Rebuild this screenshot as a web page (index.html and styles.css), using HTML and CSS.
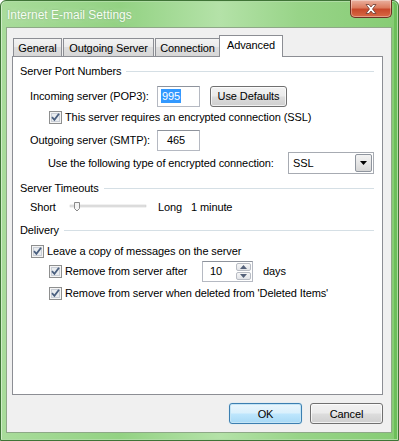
FILE: index.html
```html
<!DOCTYPE html>
<html>
<head>
<meta charset="utf-8">
<link rel="stylesheet" href="styles.css">
</head>
<body>
<div class="window">
  <div class="titlebar">
    <span class="title">Internet E-mail Settings</span>
    <div class="close">
      <svg width="18" height="12" viewBox="0 0 18 12"><path d="M4 1.5h3l2 2.5 2-2.5h3l-3.5 4.5 3.5 4.5h-3l-2-2.5-2 2.5h-3l3.5-4.5z" fill="#fff" stroke="#6b3a30" stroke-width="0.8"/></svg>
    </div>
  </div>
  <div class="client">
    <div class="tabs">
      <div class="tab t-general">General</div>
      <div class="tab t-outgoing">Outgoing Server</div>
      <div class="tab t-connection">Connection</div>
      <div class="tab active t-advanced">Advanced</div>
    </div>
    <div class="panel">
      <div class="group-head r1"><span>Server Port Numbers</span><i class="line"></i></div>
      <div class="row field r2 ind1">
        <span class="label">Incoming server (POP3):</span>
        <div class="input port"><span class="sel">995</span></div>
        <div class="btn defaults">Use Defaults</div>
      </div>
      <div class="row check r3 ind2">
        <svg class="cb" width="13" height="13" viewBox="0 0 13 13"><rect x="0.5" y="0.5" width="12" height="12" fill="#f4f4f4" stroke="#8e8f8f"/><rect x="2.5" y="2.5" width="8" height="8" fill="#e9ecef" stroke="#c9ced6"/><path d="M3 6.2l2.4 2.6 4.6-6" fill="none" stroke="#4a5f7f" stroke-width="1.8"/></svg>
        <span>This server requires an encrypted connection (SSL)</span>
      </div>
      <div class="row field r4 ind1">
        <span class="label">Outgoing server (SMTP):</span>
        <div class="input port"><span class="val">465</span></div>
      </div>
      <div class="row field r5 ind2b">
        <span>Use the following type of encrypted connection:</span>
        <div class="select">
          <span class="val">SSL</span>
          <div class="drop"><svg width="7" height="4" viewBox="0 0 7 4"><path d="M0 0h7L3.5 4z" fill="#000"/></svg></div>
        </div>
      </div>
      <div class="group-head r6"><span>Server Timeouts</span><i class="line"></i></div>
      <div class="row r7 ind1">
        <span class="short">Short</span>
        <svg class="slider" width="80" height="14" viewBox="0 0 80 14"><rect x="2" y="5" width="76" height="2" fill="#e2e2e2" stroke="#c8c8c8" stroke-width="0.5"/><path d="M6.5 2.5h5v6l-2.5 2.5-2.5-2.5z" fill="#f4f4f4" stroke="#8a8a8a"/></svg>
        <span class="long">Long</span>
        <span>1 minute</span>
      </div>
      <div class="group-head r8"><span>Delivery</span><i class="line"></i></div>
      <div class="row check r9 ind1c">
        <svg class="cb" width="13" height="13" viewBox="0 0 13 13"><rect x="0.5" y="0.5" width="12" height="12" fill="#f4f4f4" stroke="#8e8f8f"/><rect x="2.5" y="2.5" width="8" height="8" fill="#e9ecef" stroke="#c9ced6"/><path d="M3 6.2l2.4 2.6 4.6-6" fill="none" stroke="#4a5f7f" stroke-width="1.8"/></svg>
        <span>Leave a copy of messages on the server</span>
      </div>
      <div class="row field r10 ind2">
        <div class="checkwrap">
          <svg class="cb" width="13" height="13" viewBox="0 0 13 13"><rect x="0.5" y="0.5" width="12" height="12" fill="#f4f4f4" stroke="#8e8f8f"/><rect x="2.5" y="2.5" width="8" height="8" fill="#e9ecef" stroke="#c9ced6"/><path d="M3 6.2l2.4 2.6 4.6-6" fill="none" stroke="#4a5f7f" stroke-width="1.8"/></svg>
          <span>Remove from server after</span>
        </div>
        <div class="input spin">
          <span class="val">10</span>
          <div class="spinbtns">
            <div class="sb"><svg width="7" height="4" viewBox="0 0 7 4"><path d="M0 4h7L3.5 0z" fill="#55627a"/></svg></div>
            <div class="sb"><svg width="7" height="4" viewBox="0 0 7 4"><path d="M0 0h7L3.5 4z" fill="#55627a"/></svg></div>
          </div>
        </div>
        <span class="days">days</span>
      </div>
      <div class="row check r11 ind2">
        <svg class="cb" width="13" height="13" viewBox="0 0 13 13"><rect x="0.5" y="0.5" width="12" height="12" fill="#f4f4f4" stroke="#8e8f8f"/><rect x="2.5" y="2.5" width="8" height="8" fill="#e9ecef" stroke="#c9ced6"/><path d="M3 6.2l2.4 2.6 4.6-6" fill="none" stroke="#4a5f7f" stroke-width="1.8"/></svg>
        <span>Remove from server when deleted from 'Deleted Items'</span>
      </div>
    </div>
    <div class="buttons">
      <div class="btn dlg default">OK</div>
      <div class="btn dlg">Cancel</div>
    </div>
  </div>
</div>
</body>
</html>
```
FILE: styles.css
```css
* { box-sizing: border-box; }
html, body { margin: 0; padding: 0; }
body {
  width: 399px; height: 441px; overflow: hidden;
  font-family: "Liberation Sans", Arial, sans-serif;
  font-size: 11px; letter-spacing: -0.1px; color: #000;
  background: #fff;
  white-space: nowrap;
}
.window {
  width: 399px; height: 441px;
  display: flex; flex-direction: column;
  border: 1px solid #3f7436;
  border-radius: 6px 6px 0 0;
  padding: 0 6px 7px 5px;
  background: linear-gradient(90deg, #a9dc9b 0%, #93d283 30%, #b4e2a8 55%, #98d488 75%, #86cc74 100%);
  box-shadow: inset 0 0 0 1px rgba(255,255,255,0.45), inset -3px 0 0 1px #6dbf5a;
}
.titlebar {
  height: 26px; flex: none;
  display: flex; align-items: flex-start;
}
.title {
  margin-top: 7px; margin-left: 1px;
  font-size: 12px; letter-spacing: 0; color: #f6fdf3;
  text-shadow: 0 0 2px rgba(90,150,80,0.7), 0 0 6px rgba(255,255,255,0.5);
}
.close {
  margin-left: auto; margin-right: 0;
  width: 42px; height: 18px; margin-top: -1px;
  border: 1px solid #6e3124; border-top: none;
  border-radius: 0 0 5px 5px;
  background: linear-gradient(180deg, #eab1a0 0%, #dc7c5f 45%, #c8492b 55%, #d86a45 100%);
  box-shadow: inset 0 0 0 1px rgba(255,255,255,0.35);
  display: flex; align-items: center; justify-content: center;
}
.client {
  flex: 1;
  display: flex; flex-direction: column;
  background: #f0f0f0;
  border: 1px solid #8ea887;
  padding: 0 8px 8px 5px;
}
.tabs {
  height: 28px; flex: none;
  display: flex; align-items: flex-end;
  padding-left: 1px;
}
.tab {
  height: 18px;
  border: 1px solid #8c8e94; border-bottom: none;
  margin-right: 1px;
  background: linear-gradient(180deg, #f3f3f3 0%, #ebebeb 45%, #dddddd 50%, #d7d7d7 100%);
  display: flex; align-items: center; justify-content: center;
  padding-top: 1px;
}
.t-general { width: 49px; }
.t-outgoing { width: 91px; }
.t-connection { width: 65px; }
.tab.active {
  width: 64px; height: 22px;
  margin-left: -2px; margin-right: 0;
  margin-bottom: -1px;
  background: #fff;
  position: relative; z-index: 1;
  align-items: flex-start; padding-top: 3px;
}
.panel {
  flex: 1;
  background: #fff;
  border: 1px solid #8c8e94;
  padding: 6px 8px 0 7px;
  display: flex; flex-direction: column;
}
.group-head {
  height: 16px; display: flex; align-items: center;
}
.group-head .line {
  flex: 1; height: 1px; background: #d5dfe5; margin-left: 5px;
}
.row { display: flex; align-items: center; height: 16px; }
.row.field { height: 22px; }
.ind1 { margin-left: 10px; }
.ind1c { margin-left: 11px; }
.ind2 { margin-left: 29px; }
.ind2b { margin-left: 28px; }
.r2 { margin-top: 6px; }
.r3 { margin-top: 2px; }
.r4 { margin-top: 4px; }
.r5 { margin-top: 1px; }
.r6 { margin-top: 6px; }
.r7 { margin-top: 3px; }
.r8 { margin-top: 7px; }
.r9 { margin-top: 5px; }
.r10 { margin-top: 1px; }
.r11 { margin-top: 3px; }
.label { width: 127px; flex: none; }
.input {
  height: 21px; background: #fff;
  border: 1px solid #b5b9c2; border-top-color: #8e939c;
  display: flex; align-items: center;
}
.port { width: 43px; padding-left: 3px; }
.port .val { margin-left: 6px; }
.sel { background: #3399ff; color: #fff; padding: 0 1px; line-height: 14px; }
.btn {
  height: 21px;
  border: 1px solid #707070; border-radius: 3px;
  background: linear-gradient(180deg, #f2f2f2 0%, #ebebeb 48%, #dddddd 52%, #cfcfcf 100%);
  box-shadow: inset 0 0 0 1px rgba(255,255,255,0.7);
  display: flex; align-items: center; justify-content: center;
}
.defaults { width: 77px; margin-left: 10px; }
.check .cb { margin-right: 3px; flex: none; }
.checkwrap { display: flex; align-items: center; width: 153px; }
.checkwrap .cb { margin-right: 3px; }
.select {
  margin-left: auto; width: 86px; height: 22px;
  border: 1px solid #a7abb2; background: #fff;
  display: flex; align-items: center; padding: 0 1px 0 4px;
}
.select .val { flex: 1; }
.drop {
  width: 17px; height: 18px;
  border: 1px solid #8f959e; border-radius: 2px;
  background: linear-gradient(180deg, #f3f3f3 0%, #e6e6e6 50%, #d6d6d6 100%);
  display: flex; align-items: center; justify-content: center;
}
.short { width: 38px; }
.slider { margin-left: 0; }
.long { margin-left: 10px; width: 33px; }
.spin { width: 51px; padding: 1px; }
.spin .val { flex: 1; padding-left: 6px; }
.spinbtns { width: 15px; height: 17px; display: flex; flex-direction: column; gap: 1px; }
.sb {
  flex: 1;
  border: 1px solid #b8bcc4; border-radius: 2px;
  background: linear-gradient(180deg, #f6f6f6, #e2e4e8);
  display: flex; align-items: center; justify-content: center;
}
.days { margin-left: 10px; }
.buttons {
  flex: none; height: 21px; margin-top: 8px;
  display: flex; justify-content: flex-end; gap: 8px;
}
.dlg { width: 73px; }
.dlg.default {
  border-color: #3c7fb1;
  box-shadow: inset 0 0 0 1px #c4e5f6, 0 0 1px #8fd1f2;
  background: linear-gradient(180deg, #eaf6fd 0%, #d9f0fc 48%, #bee6fd 52%, #a7d9f5 100%);
}
```
